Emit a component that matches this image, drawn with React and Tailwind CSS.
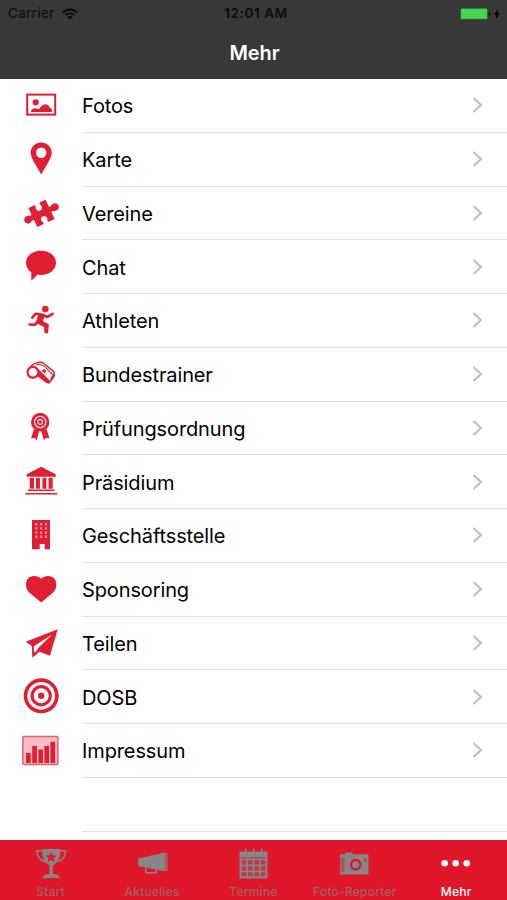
import React from 'react';

const RED = '#e01f33';

// List icons share one 42 x 53.75 cell, drawn 1:1
const rows = [
  {
    label: 'Fotos',
    icon: (
      <>
        <rect x="7.2" y="15.6" width="28" height="20" fill="none" strokeWidth="2" stroke={RED} />
        <circle cx="15.7" cy="23.3" r="3.1" />
        <path d="M11 33c0-3 3-4.2 5-3.5 1.5.3 2.5.8 3.5 0 2-3.5 6-5.5 8.500-3.500 1.500 1.200 1.200 2.500 2.500 3 1.200.5 1.500 2 1.500 4z" />
      </>
    ),
  },
  {
    label: 'Karte',
    icon: (
      <path
        fillRule="evenodd"
        d="M21.2 9.6c5.900 0 10.500 4.400 10.500 10 0 3.400-1.500 6-3 8.800L21.200 41.600 13.700 28.400c-1.500-2.800-3-5.400-3-8.800 0-5.600 4.600-10 10.500-10zM21.200 14.600a5.200 5.200 0 1 0 0 10.400 5.200 5.200 0 0 0 0-10.400z"
      />
    ),
  },
  {
    label: 'Vereine',
    icon: (
      <path
        transform="translate(21.5 26.400) rotate(-25)"
        d="M-9.500-10.500H-3C-1.500-10-2.500-8.500-3-7.500A3.200 3.200 0 1 0 3-7.500C2.500-8.500 1.500-10 3-10.500H9.500V-3.500C10-2 11.500-2.500 12.500-3.200A3.900 3.900 0 1 1 12.500 3.200C11.500 2.500 10 2 9.500 3.500V10.500H3C1.500 10 2.500 8.500 3 7.500A3.200 3.200 0 1 0-3 7.500C-2.500 8.500-1.500 10-3 10.500H-9.500V3.500C-10 2-11.500 2.500-12.500 3.200A3.900 3.900 0 1 1-12.500-3.200C-11.500-2.500-10-2-9.500-3.500z"
      />
    ),
  },
  {
    label: 'Chat',
    icon: (
      <path d="M21 10.700c8.500 0 15 5.200 15 12s-6.500 12.200-15 12.200c-1.300 0-2.500-.1-3.600-.3-1.800 2.500-4 4.500-6.100 5.800V32.300C8 30 6 26.700 6 22.700c0-6.800 6.500-12 15-12z" />
    ),
  },
  {
    label: 'Athleten',
    icon: (
      <>
        <circle cx="25.3" cy="15.1" r="3.300" />
        <path
          d="M12.300 23.800 15.500 19.800 22.500 20.700 27 23 32.600 19.900M9.500 30.500 14.800 30.900 18.500 26.500"
          fill="none" stroke={RED} strokeWidth="2.600" strokeLinecap="round" strokeLinejoin="round"
        />
        <path d="M19 19.800 24.500 21 22.200 27.300 28.200 30.800 27.500 38.800 25 38.500 24.700 32.700 16.500 28.500z" stroke={RED} strokeWidth="1.200" strokeLinejoin="round" />
      </>
    ),
  },
  {
    label: 'Bundestrainer',
    icon: (
      <>
        <g fill="none" stroke={RED} strokeWidth="2.200">
          <circle cx="12.900" cy="24.300" r="5.400" />
          <path d="M9.800 19.500C12.500 15.800 18 13.300 22.500 14.500L33.800 23.600 34.300 27.800 29.300 34.800 26.500 34.200 18 27" strokeWidth="1.500" strokeLinejoin="round" />
          <path d="M16 16.800C20 16 24 17.500 26.500 20.500L33 27" strokeWidth="1.100" />
        </g>
        <path d="M16.800 19.800 22 24.700 26 28.800 29.800 32.500 28.300 35.800 17.500 28.500 19 25z" />
        <path d="M21.500 22.800 24.200 20.900 26.300 23 24.500 25.200zM30 30l4-4 .6 2.500-2.700 4z" />
      </>
    ),
  },
  {
    label: 'Prüfungsordnung',
    icon: (
      <>
        <path d="M14 27 19.300 29 16.500 38.400 14.700 35.800 11 36.400zM26.500 27 21.200 29 24 38.400 25.800 35.800 29.500 36.400z" />
        <circle cx="20.200" cy="20" r="9.200" />
        <g fill="none" stroke="#fff" strokeWidth="1.200" opacity=".85">
          <circle cx="20.200" cy="20" r="5.700" />
          <circle cx="20.200" cy="20" r="2.400" />
        </g>
      </>
    ),
  },
  {
    label: 'Präsidium',
    icon: (
      <>
        <path d="M21.200 11.700 35.700 19.300V21.700H6.700V19.300zM9.700 22.700h4.300V33.700H9.700zM15.900 22.700h4V33.700h-4zM22.400 22.700h4V33.700h-4zM28.500 22.700h4.200V33.700h-4.200z" />
        <path d="M8 34.500h26.500v1.600H8zM5.300 37.900h32v1.700h-32z" />
      </>
    ),
  },
  {
    label: 'Geschäftsstelle',
    icon: (
      <>
        <path d="M12 11h18v29.300h-5.300V35h-5v5.300H12z" />
        <path
          d="M15.200 14h2.200v2.400h-2.200zM20 14h2.200v2.400H20zM24.800 14H27v2.400h-2.200zM15.200 18.200h2.200v2.400h-2.200zM20 18.200h2.200v2.400H20zM24.800 18.200H27v2.400h-2.200zM15.200 22.400h2.200v2.400h-2.200zM20 22.400h2.200v2.400H20zM24.800 22.400H27v2.400h-2.200zM15.200 26.600h2.200v2.400h-2.200zM20 26.600h2.200v2.400H20zM24.800 26.600H27v2.400h-2.200z"
          fill="#f2929d"
        />
      </>
    ),
  },
  {
    label: 'Sponsoring',
    icon: (
      <path d="M21.200 39.500 9.200 29.500C7 27.300 6 24.800 6 21.500 6 16.500 9.200 13 13.800 13c3.300 0 6 .8 7.400 3C22.600 13.800 25.200 13 28.500 13c4.600 0 7.800 3.500 7.800 8.500 0 3.300-1 5.800-3.200 8z" />
    ),
  },
  {
    label: 'Teilen',
    icon: (
      <path
        fillRule="evenodd"
        d="M37.700 12.200 30 38.800 19.500 34.800 12.300 40.800 11.800 29 5.700 24.700zM32.500 17.300 13.800 29.200 14 35.500 16 34.500 18.500 30.800z"
      />
    ),
  },
  {
    label: 'DOSB',
    icon: (
      <>
        <g fill="none" stroke={RED} strokeWidth="3.700">
          <circle cx="21.200" cy="25.800" r="15.700" />
          <circle cx="21.200" cy="25.800" r="9.100" strokeWidth="3.200" />
        </g>
        <circle cx="21.200" cy="25.800" r="3.200" />
      </>
    ),
  },
  {
    label: 'Impressum',
    icon: (
      <>
        <rect x="2.900" y="12.400" width="35" height="28" rx=".8" fill="#f6bcc3" stroke="#e4606f" strokeWidth="1.500" />
        <path d="M6 29h4.700v10H6zM12.200 22h4.700v17h-4.700zM18.400 25.500H23V39h-4.600zM24.400 22H29v17h-4.600zM30.400 17.800h4.700V39h-4.700z" />
      </>
    ),
  },
];

const tabs = [
  {
    label: 'Start',
    icon: (
      <>
        <path d="M17.200 9h18c.3 8-2 14.500-7.300 16.200V34h2c2 .3 3.500 1.300 4.500 2.800V38H18v-1.200c1-1.500 2.500-2.500 4.500-2.800h2v-8.800C19.200 23.500 16.900 17 17.200 9z" />
        <path d="M17.500 10.700h-5.700C12 16 14.500 20 19.500 21.500M35 10.700h5.700C40.500 16 38 20 33 21.500" fill="none" stroke="#868686" strokeWidth="1.500" />
        <path d="M26.200 11.700l1.600 3.500 3.800.4-2.900 2.600.9 3.800-3.400-2-3.400 2 .9-3.800-2.900-2.600 3.800-.4z" fill="#e0162b" />
      </>
    ),
  },
  {
    label: 'Aktuelles',
    icon: (
      <g transform="translate(2 0)">
        <path d="M9.200 18.500 34.500 12.800h2V31h-2L9.200 26z" />
        <path d="M37 12.800h1.700V31H37z" opacity=".7" />
        <path d="M16.700 27v5.700h10.500v-4.200" fill="none" stroke="#868686" strokeWidth="1.500" strokeLinejoin="round" />
      </g>
    ),
  },
  {
    label: 'Termine',
    icon: (
      <>
        <path d="M11.500 11.500h28v27h-28zM17 8.700h1.600v4H17zM25 8.700h1.600v4H25zM33 8.700h1.600v4H33z" />
        <g fill="#e0162b">
          <path d="M13 17.500h25v.9H13z" />
          <path d="M13.700 20.200h4.600v4.400h-4.600zM20 20.200h4.600v4.400H20zM26.400 20.200H31v4.400h-4.600zM32.700 20.200h4.600v4.400h-4.600zM13.700 26.200h4.600v4.400h-4.600zM20 26.200h4.600v4.400H20zM26.400 26.200H31v4.400h-4.600zM32.700 26.200h4.600v4.400h-4.600zM13.700 32.200h4.600v4h-4.600zM20 32.200h4.600v4H20zM26.400 32.200H31v4h-4.600zM32.700 32.200h4.600v4h-4.600z" opacity=".7" />
        </g>
      </>
    ),
  },
  {
    label: 'Foto-Reporter',
    icon: (
      <>
        <path d="M11 14.200h4.500l1.300-1.700h6l1.500 1.700h15.200v20.300H11z" />
        <path d="M11.500 17.500h4V32h-4z" fill="#b0525a" />
        <circle cx="26.700" cy="24.700" r="4.700" fill="none" stroke="#e0162b" strokeWidth="2.400" />
        <path d="M35.200 18.500h2v3.500h-2z" fill="#c83a47" />
      </>
    ),
  },
  {
    label: 'Mehr',
    active: true,
    icon: (
      <>
        <circle cx="13.700" cy="23.300" r="3.300" />
        <circle cx="24.700" cy="23.300" r="3.300" />
        <circle cx="35.700" cy="23.300" r="3.300" />
      </>
    ),
  },
];

function StatusBar() {
  return (
    <div className="grid h-[27px] grid-cols-3 items-center pr-[6px] pl-[8px] text-[13.5px] text-[#0c0c0c]">
      <div className="flex items-center gap-[7px]">
        <span className="tracking-[0.35px]">Carrier</span>
        <svg width="16" height="12" viewBox="0 0 16 12" fill="none" stroke="#0c0c0c" strokeWidth="1.900">
          <path d="M1 4.500C5 .4 11 .4 15 4.500M3.600 7.200C6 4.700 10 4.700 12.400 7.200" />
          <path d="M8 11.800 5.400 9.100C6.900 7.700 9.100 7.700 10.600 9.100z" fill="#0c0c0c" stroke="none" />
        </svg>
      </div>
      <span className="pl-[3px] text-center font-semibold tracking-[0.6px] whitespace-nowrap">12:01 AM</span>
      <svg className="justify-self-end" width="41" height="14" viewBox="0 0 41 14">
        <rect x=".5" y="1.300" width="27" height="11" rx="1.500" fill="#46d552" stroke="#1f4f26" strokeWidth=".6" />
        <path d="M29 5c1.300.3 1.300 3.700 0 4z" />
        <path d="M38 2 33.800 7.700h2.500L35.700 12 40 6.300h-2.600z" />
      </svg>
    </div>
  );
}

export default function App() {
  return (
    <div className="flex h-[900px] w-[507px] flex-col overflow-hidden bg-white font-['Inter','Liberation_Sans',sans-serif]">
      <header className="h-[79px] shrink-0 bg-[#383838]">
        <StatusBar />
        <h1 className="pt-[10px] pl-[2px] text-center text-[20px] leading-[32px] font-semibold tracking-[-0.1px] text-white">Mehr</h1>
      </header>

      <main className="flex-1 overflow-hidden">
        {rows.map(({ label, icon }) => (
          <div key={label} className="flex h-[53.75px] pl-[20px]">
            <svg className="shrink-0" width="42" height="53.75" viewBox="0 0 42 53.75" fill={RED}>{icon}</svg>
            <div className="ml-[20px] flex flex-1 items-center justify-between border-b border-[#e3e3e5] pr-[24px]">
              <span className="pt-[2px] text-[20px] tracking-[-0.12px] text-black">{label}</span>
              <svg width="11" height="18" viewBox="0 0 11 18" fill="none" stroke="#bdbdc1" strokeWidth="2">
                <path d="M1.500 2 9 9 1.500 16" />
              </svg>
            </div>
          </div>
        ))}
        <div className="ml-[82px] h-[53.75px] border-b border-[#e3e3e5]" />
      </main>

      <nav className="grid h-[60px] shrink-0 grid-cols-5 bg-[#e0162b]">
        {tabs.map(({ label, icon, active }) => (
          <div key={label} className={`flex flex-col items-center ${active ? 'text-white' : 'text-[#a05f65]'}`}>
            <svg width="51" height="43" viewBox="0 0 51 43" fill={active ? '#fff' : '#868686'}>{icon}</svg>
            <span className="text-[12px] leading-[17px] font-medium tracking-[0.25px] whitespace-nowrap">{label}</span>
          </div>
        ))}
      </nav>
    </div>
  );
}
